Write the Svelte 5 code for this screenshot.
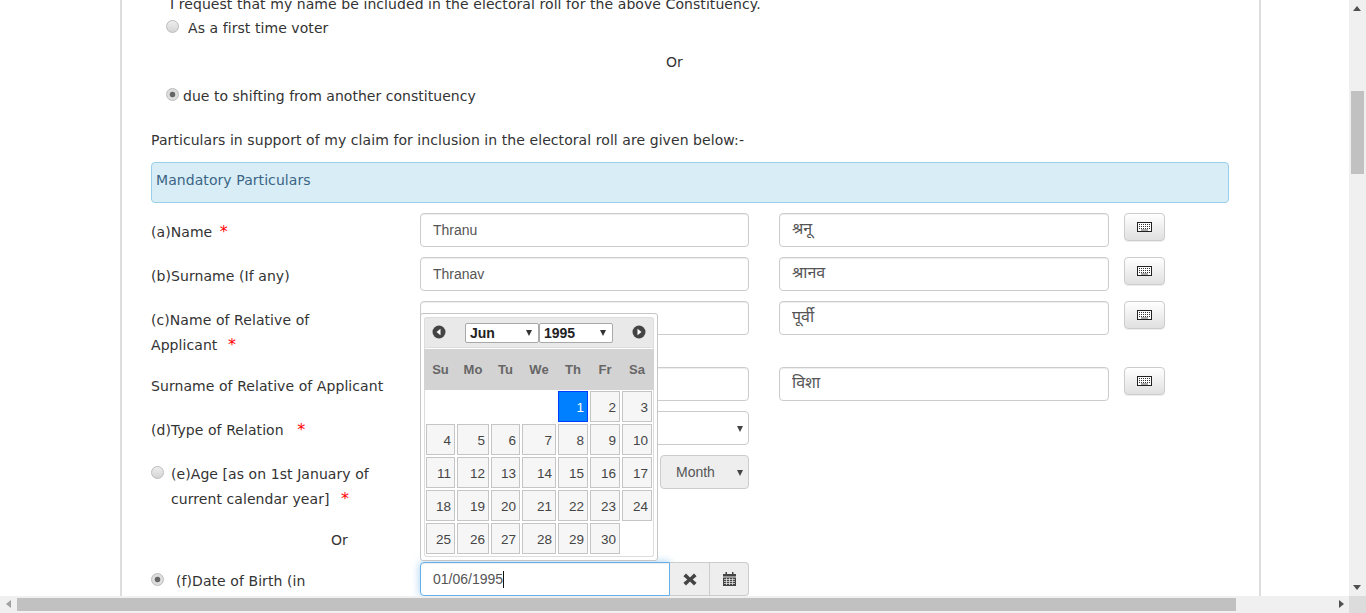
<script>
  const weekdays = ['Su', 'Mo', 'Tu', 'We', 'Th', 'Fr', 'Sa'];
  const days = Array.from({ length: 30 }, (_, i) => i + 1);
  const keyRows = [2.5, 4.5, 6.5];
</script>

{#snippet keyboard()}
  <button class="kbd" type="button" aria-label="keyboard">
    <svg width="15" height="10" viewBox="0 0 15 10">
      <rect x="0.5" y="0.5" width="14" height="9" fill="#fff" stroke="#222" />
      {#each keyRows as y}
        <line x1="2" x2="13" y1={y} y2={y} stroke="#333" stroke-dasharray="1 1" />
      {/each}
      <line x1="4" x2="11" y1="8" y2="8" stroke="#555" />
    </svg>
  </button>
{/snippet}

<div class="window">
  <div class="top">
    <div class="viewport">
      <div class="sheet">
        <p class="request">I request that my name be included in the electoral roll for the above Constituency.</p>
        <div class="choice voter"><input class="radio" type="radio" name="why" /><span>As a first time voter</span></div>
        <div class="or-line">Or</div>
        <div class="choice shifting"><input class="radio" type="radio" name="why" checked /><span>due to shifting from another constituency</span></div>
        <p class="support">Particulars in support of my claim for inclusion in the electoral roll are given below:-</p>
        <div class="panel">Mandatory Particulars</div>

        <div class="rows">
          <div class="row">
            <div class="label">(a)Name <span class="star">*</span></div>
            <input class="field" value="Thranu" />
            <input class="field hindi" value="श्रनू" />
            {@render keyboard()}
          </div>
          <div class="row">
            <div class="label">(b)Surname (If any)</div>
            <input class="field" value="Thranav" />
            <input class="field hindi" value="श्रानव" />
            {@render keyboard()}
          </div>
          <div class="row">
            <div class="label narrow">(c)Name of Relative of Applicant <span class="star gap-c">*</span></div>
            <input class="field" />
            <input class="field hindi" value="पूर्वी" />
            {@render keyboard()}
          </div>
          <div class="row">
            <div class="label">Surname of Relative of Applicant</div>
            <input class="field" />
            <input class="field hindi" value="विशा" />
            {@render keyboard()}
          </div>
          <div class="row">
            <div class="label">(d)Type of Relation <span class="star gap-d">*</span></div>
            <div class="select-box"></div>
          </div>
          <div class="row">
            <div class="label with-radio">
              <input class="radio" type="radio" name="age" />
              <span class="age-text">(e)Age [as on 1st January of current calendar year] <span class="star gap-e">*</span></span>
            </div>
            <div class="age-group">
              <div class="select-box off"></div>
              <div class="select-box off">Month</div>
            </div>
          </div>
          <div class="row">
            <div class="label or-small">Or</div>
          </div>
          <div class="row">
            <div class="label with-radio">
              <input class="radio" type="radio" name="age" checked />
              <span class="dob-text">(f)Date of Birth (in</span>
            </div>
            <div class="date-group">
              <div class="date-input"><span>01/06/1995</span><i class="caret"></i></div>
              <button class="addon" type="button" aria-label="clear">
                <svg width="14" height="13" viewBox="0 0 14 13">
                  <path d="M3 .6 7 4.4 11 .6 13.6 3.2 9.7 6.5 13.6 9.8 11 12.4 7 8.6 3 12.4.4 9.8 4.3 6.5.4 3.2Z" fill="#444" />
                </svg>
              </button>
              <button class="addon" type="button" aria-label="calendar">
                <svg width="13" height="14" viewBox="0 0 13 14">
                  <path d="M0 2H2.500V0H4V2H9V0H10.500V2H13V4.500H0Z" fill="#444" />
                  <path d="M0 5.500H13V14H0Z" fill="#444" />
                  <path d="M1 7.500H12M1 9.500H12M1 11.500H12M3.500 6V13M6.500 6V13M9.500 6V13" stroke="#eee" stroke-width=".7" />
                </svg>
              </button>
            </div>
          </div>

          <div class="picker">
            <div class="picker-inner">
              <div class="picker-head">
                <svg class="nav" width="14" height="14" viewBox="0 0 14 14"><circle cx="7" cy="7" r="6.500" fill="#444" /><path d="M8.500 3.800V10.200L4.500 7Z" fill="#fff" /></svg>
                <div class="selects">
                  <div class="mini"><select><option>Jun</option></select></div>
                  <div class="mini"><select><option>1995</option></select></div>
                </div>
                <svg class="nav" width="14" height="14" viewBox="0 0 14 14"><circle cx="7" cy="7" r="6.500" fill="#444" /><path d="M5.500 3.800V10.200L9.500 7Z" fill="#fff" /></svg>
              </div>
              <div class="week">
                {#each weekdays as d}<span>{d}</span>{/each}
              </div>
              <div class="month">
                {#each days as d}
                  <span class="day" class:active={d === 1} style={d === 1 ? 'grid-column-start: 5' : ''}>{d}</span>
                {/each}
              </div>
            </div>
          </div>
        </div>
      </div>
    </div>
    <div class="vbar">
      <i class="arrow up"></i>
      <div class="vthumb"></div>
      <i class="arrow down"></i>
    </div>
  </div>
  <div class="hbar">
    <i class="arrow left"></i>
    <div class="hthumb"></div>
    <i class="arrow right"></i>
    <div class="corner"></div>
  </div>
</div>

<style>
  :global(body) {
    margin: 0;
    overflow: hidden;
    background: #fff;
  }

  .window {
    width: 1366px;
    height: 613px;
    display: flex;
    flex-direction: column;
    overflow: hidden;
    font-family: "DejaVu Sans", Verdana, sans-serif;
    font-size: 14px;
    line-height: 25px;
    letter-spacing: .07px;
    color: #333;
  }
  .top {
    display: flex;
    height: 596px;
  }
  .viewport {
    width: 1349px;
    height: 596px;
    overflow: hidden;
  }
  .sheet {
    box-sizing: border-box;
    width: 1141px;
    margin: -8px 0 0 120px;
    padding: 0 30px 0 29px;
    border: solid #ddd;
    border-width: 0 2px;
    height: 700px;
  }

  p {
    margin: 0;
  }
  .request {
    padding-left: 19px;
    line-height: 24px;
  }
  .choice {
    display: flex;
    align-items: center;
    padding-left: 15px;
    height: 25px;
  }
  .voter span {
    margin-left: 9px;
  }
  .shifting span {
    margin-left: 4px;
    letter-spacing: .03px;
  }
  .or-line {
    margin: 9px 0;
    padding-left: 515px;
  }
  .support {
    margin-top: 19px;
  }
  .panel {
    box-sizing: border-box;
    height: 41px;
    margin-top: 9px;
    padding: 5px 4px;
    border: 1px solid #9acfea;
    border-radius: 4px;
    background: #d9edf7;
    color: #3a6585;
  }

  .radio {
    appearance: none;
    flex: none;
    width: 13px;
    height: 13px;
    margin: -4px 0 0;
    border: 1px solid #bbb;
    border-radius: 50%;
    background: linear-gradient(#eee, #d4d4d4);
  }
  .radio:checked {
    background: radial-gradient(circle, #666 0 2.500px, #ddd 3.200px);
  }

  .rows {
    position: relative;
    margin-top: 10px;
  }
  .row {
    display: grid;
    grid-template-columns: 269px 329px 330px 41px;
    align-items: start;
    margin-bottom: 10px;
  }
  .label {
    padding-top: 7px;
    margin-bottom: -1px;
  }
  .narrow {
    width: 190px;
  }
  .star {
    color: #f00;
    font-size: 16px;
    line-height: 0;
    margin-left: 3px;
  }
  .gap-c {
    margin-left: 6px;
  }
  .gap-d {
    margin-left: 9px;
  }
  .gap-e {
    margin-left: 7px;
  }
  .with-radio {
    display: flex;
    width: 240px;
  }
  .with-radio .radio {
    margin-top: 4px;
  }
  .age-text {
    margin-left: 7px;
  }
  .dob-text {
    margin-left: 12px;
  }
  .or-small {
    padding-left: 180px;
  }

  .field {
    box-sizing: border-box;
    width: 329px;
    height: 34px;
    padding: 6px 12px;
    border: 1px solid #ccc;
    border-radius: 4px;
    background: #fff;
    box-shadow: inset 0 1px 1px rgba(0, 0, 0, .075);
    font: 14px "Liberation Sans", Arial, sans-serif;
    color: #555;
    outline: none;
  }
  .hindi {
    width: 330px;
    margin-left: 30px;
    padding: 3px 12px 7px;
    font-family: "Liberation Sans", "Noto Sans", sans-serif;
    font-size: 16px;
  }
  .row > .hindi {
    justify-self: start;
    grid-column: 3;
  }
  .kbd {
    grid-column: 4;
    margin-left: 45px;
    width: 41px;
    height: 28px;
    padding: 0;
    display: flex;
    align-items: center;
    justify-content: center;
    border: 1px solid #ccc;
    border-radius: 4px;
    background: linear-gradient(#fff, #e0e0e0);
    box-shadow: 0 1px 1px rgba(0, 0, 0, .075);
  }

  .select-box {
    position: relative;
    box-sizing: border-box;
    height: 34px;
    padding: 0 15px;
    border: 1px solid #ccc;
    border-radius: 4px;
    background: #fff;
    font: 14px/32px "Liberation Sans", Arial, sans-serif;
    letter-spacing: 0;
    color: #555;
  }
  .select-box::after {
    content: "";
    position: absolute;
    right: 5px;
    top: 14px;
    border: 3.500px solid transparent;
    border-top: 6px solid #444;
    border-bottom: 0;
  }
  .off {
    background: #eee;
  }
  .age-group {
    display: grid;
    grid-template-columns: 230px 89px;
    gap: 10px;
  }

  .date-group {
    display: flex;
    width: 329px;
    height: 34px;
  }
  .date-input {
    box-sizing: border-box;
    flex: none;
    width: 250px;
    padding: 0 12px;
    border: 1px solid #66afe9;
    border-radius: 4px 0 0 4px;
    box-shadow: inset 0 1px 1px rgba(0, 0, 0, .075), 0 0 8px rgba(102, 175, 233, .6);
    font: 14px/32px "Liberation Sans", Arial, sans-serif;
    letter-spacing: 0;
    color: #555;
    background: #fff;
  }
  .caret {
    display: inline-block;
    width: 1px;
    height: 17px;
    background: #111;
    vertical-align: -4px;
  }
  .addon {
    box-sizing: border-box;
    width: 40px;
    padding: 0;
    display: flex;
    align-items: center;
    justify-content: center;
    border: 1px solid #ccc;
    border-left: 0;
    background: #eee;
  }
  .addon:last-child {
    width: 39px;
    border-radius: 0 4px 4px 0;
  }

  .picker {
    position: absolute;
    left: 269px;
    top: 100px;
    box-sizing: border-box;
    width: 238px;
    height: 248px;
    padding: 3px;
    border: 1px solid #c5c5c5;
    border-radius: 3px;
    background: #fff;
    font-family: "Liberation Sans", Arial, sans-serif;
    letter-spacing: 0;
  }
  .picker-inner {
    box-sizing: border-box;
    height: 240px;
    border: 1px solid #ddd;
    border-top: 0;
    border-radius: 3px;
  }
  .picker-head {
    box-sizing: border-box;
    height: 31px;
    display: flex;
    align-items: center;
    justify-content: space-between;
    padding: 0 7px;
    margin: 0 -1px;
    border: 1px solid #ddd;
    border-radius: 3px 3px 0 0;
    background: #e9e9e9;
  }
  .nav {
    flex: none;
    margin-bottom: 1px;
  }
  .selects {
    display: flex;
    margin-top: 1px;
  }
  .mini {
    position: relative;
    width: 74px;
    height: 20px;
  }
  .mini::after {
    content: "";
    position: absolute;
    right: 7px;
    top: 7px;
    border: 3px solid transparent;
    border-top: 6px solid #333;
    border-bottom: 0;
  }
  .mini select {
    appearance: none;
    display: block;
    box-sizing: border-box;
    width: 74px;
    height: 20px;
    padding: 0 4px;
    border: 1px solid #a9a9a9;
    border-radius: 2px;
    background: #fff;
    font: bold 14px "Liberation Sans", Arial, sans-serif;
    color: #222;
    outline: none;
  }

  .week,
  .month {
    display: grid;
    grid-template-columns: 29px 32px 29px 34px 30px 30px 30px;
    column-gap: 2px;
    margin: 0 -1px;
    padding-left: 2px;
  }
  .week {
    height: 41px;
    align-items: center;
    margin-top: 1px;
    background: #d3d3d3;
    font-size: 13px;
    font-weight: bold;
    color: #666;
    text-align: center;
  }
  .month {
    row-gap: 2px;
    grid-auto-rows: 31px;
    padding-top: 1px;
  }
  .day {
    box-sizing: border-box;
    padding-right: 3px;
    border: 1px solid #c5c5c5;
    background: #f6f6f6;
    font-size: 13.500px;
    line-height: 31px;
    text-align: right;
    color: #454545;
  }
  .active {
    border-color: #003eff;
    background: #007fff;
    color: #fff;
  }

  .vbar {
    position: relative;
    width: 17px;
    background: #f0f0f0;
  }
  .vthumb {
    position: absolute;
    left: 2px;
    top: 91px;
    width: 13px;
    height: 83px;
    background: #c1c1c1;
  }
  .hbar {
    position: relative;
    height: 17px;
    background: #f0f0f0;
  }
  .hthumb {
    position: absolute;
    left: 17px;
    top: 2px;
    width: 1219px;
    height: 13px;
    background: #c1c1c1;
  }
  .corner {
    position: absolute;
    right: 0;
    top: 0;
    width: 17px;
    height: 17px;
    background: #dcdcdc;
  }
  .arrow {
    position: absolute;
    width: 0;
    height: 0;
    border: 4px solid transparent;
  }
  .up {
    left: 4px;
    top: 6px;
    border-width: 0 4px 5px;
    border-bottom-color: #505050;
  }
  .down {
    left: 4px;
    bottom: 6px;
    border-width: 5px 4px 0;
    border-top-color: #505050;
  }
  .left {
    left: 6px;
    top: 4px;
    border-width: 4px 5px 4px 0;
    border-right-color: #a0a0a0;
  }
  .right {
    left: 1339px;
    top: 4px;
    border-width: 4px 0 4px 5px;
    border-left-color: #505050;
  }
</style>
